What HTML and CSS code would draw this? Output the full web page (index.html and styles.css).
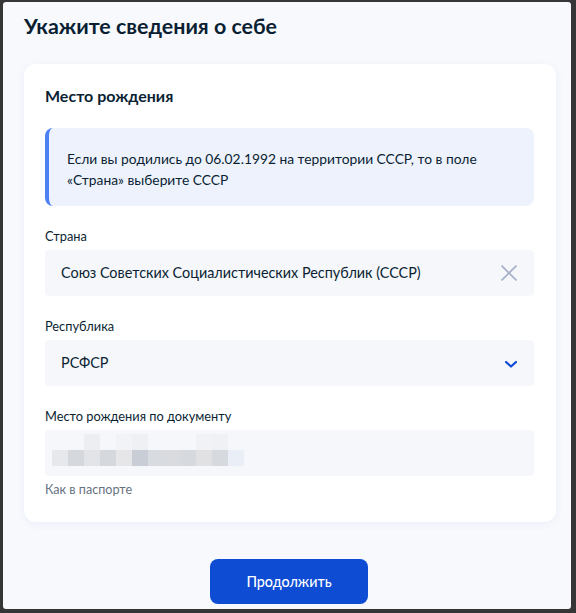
FILE: index.html
```html
<!DOCTYPE html>
<html lang="ru">
<head>
<meta charset="utf-8">
<title>Укажите сведения о себе</title>
<link rel="stylesheet" href="styles.css">
</head>
<body>
<div class="window">
  <h1 class="title">Укажите сведения о себе</h1>
  <section class="card">
    <h2 class="card-title">Место рождения</h2>
    <div class="info">Если вы родились до 06.02.1992 на территории СССР, то в поле «Страна» выберите СССР</div>

    <div class="field">
      <div class="label">Страна</div>
      <div class="input">
        <span class="value">Союз Советских Социалистических Республик (СССР)</span>
        <svg class="icon-x" width="16" height="16" viewBox="0 0 16 16"><path d="M0.5 0.5 L15.5 15.5 M15.5 0.5 L0.5 15.5" stroke="#a6b1c9" stroke-width="1.6" fill="none"/></svg>
      </div>
    </div>

    <div class="field">
      <div class="label">Республика</div>
      <div class="input">
        <span class="value">РСФСР</span>
        <svg class="icon-chev" width="12" height="7" viewBox="0 0 12 7"><path d="M1 1 L6 5.5 L11 1" stroke="#0d4cd3" stroke-width="2.2" fill="none" stroke-linecap="round" stroke-linejoin="round"/></svg>
      </div>
    </div>

    <div class="field">
      <div class="label">Место рождения по документу</div>
      <div class="input input-blur">
        <div class="blur">
          <span></span><span></span><span></span><span></span><span></span><span></span><span></span><span></span><span></span><span></span><span></span><span></span>
          <span></span><span></span><span></span><span></span><span></span><span></span><span></span><span></span><span></span><span></span><span></span><span></span>
        </div>
      </div>
      <div class="hint">Как в паспорте</div>
    </div>
  </section>
  <div class="actions">
    <button class="btn">Продолжить</button>
  </div>
</div>
</body>
</html>
```
FILE: styles.css
```css
html, body {
  margin: 0;
  padding: 0;
}
body {
  background: #363636;
  height: 613px;
  overflow: hidden;
  font-family: Lato, "Noto Sans", sans-serif;
  color: #0b1f33;
}
.window {
  margin: 2px 5px 4px 3px;
  height: 607px;
  box-sizing: border-box;
  background: #f7f9fd;
  border-radius: 3px;
  padding: 10px 0 0 21px;
}
.title {
  margin: 0;
  font-size: 21.4px;
  line-height: 28px;
  font-weight: 700;
  color: #0b1f33;
}
.card {
  margin-top: 24px;
  width: 532px;
  box-sizing: border-box;
  background: #fff;
  border-radius: 12px;
  box-shadow: 0 2px 8px rgba(30, 60, 130, 0.06);
  padding: 20px 22px 22px 21px;
}
.card-title {
  margin: 0;
  font-size: 16px;
  line-height: 24px;
  font-weight: 700;
}
.info {
  margin-top: 20px;
  background: #edf2fd;
  border-left: 4px solid #4d7ff5;
  border-radius: 8px;
  padding: 20px 16px 16px 18px;
  font-size: 13.8px;
  line-height: 21px;
  color: #0b1f33;
}
.field {
  margin-top: 20px;
}
.label {
  font-size: 12.8px;
  line-height: 20px;
  margin-bottom: 4px;
  color: #0b1f33;
}
.input {
  height: 46px;
  box-sizing: border-box;
  background: #f5f7fb;
  border-radius: 4px;
  display: flex;
  align-items: center;
  justify-content: space-between;
  padding: 0 17px 0 16px;
}
.value {
  font-size: 14.4px;
  line-height: 20px;
}
.icon-x {
  display: block;
}
.icon-chev {
  display: block;
  margin-top: 2px;
}
.input-blur {
  align-items: flex-start;
  padding: 4px 0 0 7px;
}
.blur {
  display: grid;
  grid-template-columns: repeat(12, 16px);
  grid-template-rows: 16px 16px;
}
.blur span:nth-child(3) { background: #eceef1; }
.blur span:nth-child(5) { background: #f1f3f6; }
.blur span:nth-child(6) { background: #eef0f3; }
.blur span:nth-child(10) { background: #f0f2f5; }
.blur span:nth-child(11) { background: #eff1f4; }
.blur span:nth-child(13) { background: #e6e8eb; }
.blur span:nth-child(14) { background: #d5d9dd; }
.blur span:nth-child(15) { background: #e3e4e7; }
.blur span:nth-child(16) { background: #d5d9de; }
.blur span:nth-child(17) { background: #e6e6e8; }
.blur span:nth-child(18) { background: #c9ced6; }
.blur span:nth-child(19) { background: #d8dbdf; }
.blur span:nth-child(20) { background: #d9dbdf; }
.blur span:nth-child(21) { background: #d6dadf; }
.blur span:nth-child(22) { background: #e1e1e3; }
.blur span:nth-child(23) { background: #d6d9dd; }
.blur span:nth-child(24) { background: #eaeef7; }
.hint {
  margin-top: 4px;
  font-size: 12.6px;
  line-height: 20px;
  color: #66727f;
}
.actions {
  width: 532px;
  display: flex;
  justify-content: center;
  margin-top: 37px;
}
.btn {
  width: 158px;
  height: 45px;
  border: 0;
  border-radius: 8px;
  background: #0d4cd3;
  color: #fff;
  font-family: Lato, "Noto Sans", sans-serif;
  font-size: 14.3px;
  font-weight: 500;
  padding: 0;
  margin-left: -2px;
}
```
